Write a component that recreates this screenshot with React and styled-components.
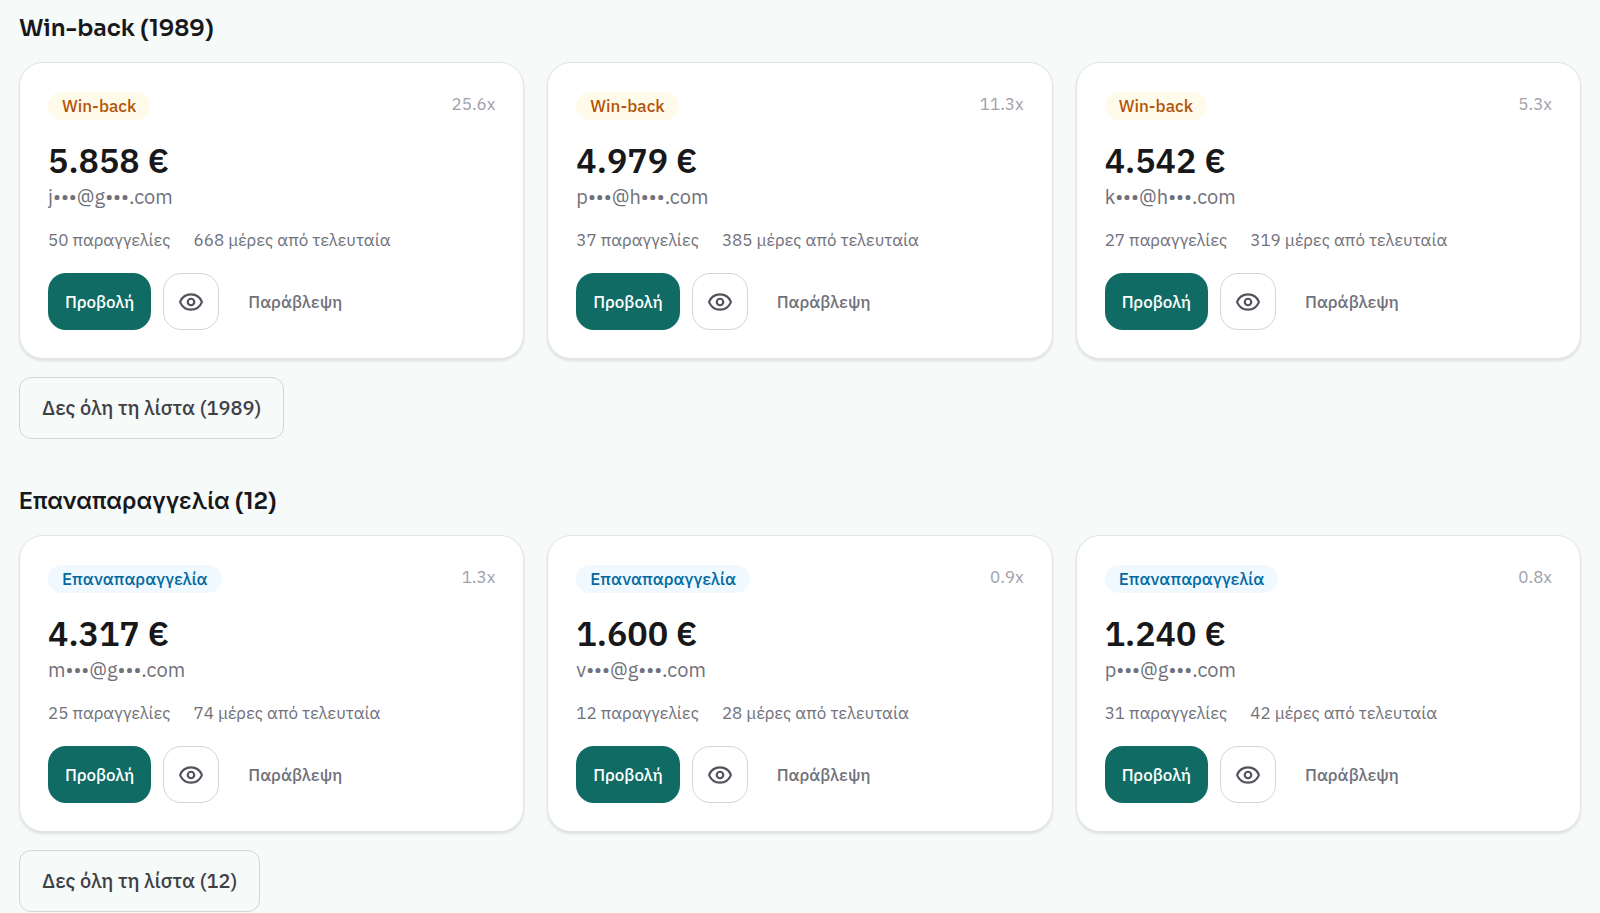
import styled, { createGlobalStyle } from "styled-components"
import { Eye } from "lucide-react"

const GlobalStyle = createGlobalStyle`
*{ box-sizing:border-box; }
body{
  margin:0;
  background:#f6faf9;
  color:#18181b;
  font-family:"IBM Plex Sans", Roboto, "Noto Sans", sans-serif;
}
button{
  font-family:inherit;
  cursor:pointer;
}
`
const Wrapper = styled.main`
display:flex;
flex-direction:column;
gap:48px;
padding:14px 19px 0 19px;
`
const Section = styled.section`
display:flex;
flex-direction:column;
align-items:flex-start;
`
const Title = styled.h2`
margin:0 0 18px 0;
font-family:Sora, Inter, sans-serif;
font-size:23px;
line-height:30px;
font-weight:600;
`
const Grid = styled.div`
display:grid;
grid-template-columns:repeat(3, 1fr);
gap:23px;
width:100%;
`
const Card = styled.article`
padding:29px 28px 28px;
background:#fff;
border:1px solid #e4e4e7;
border-radius:24px;
box-shadow:0 2px 3px rgba(0,0,0,0.1);
`
const CardTop = styled.div`
display:flex;
align-items:flex-start;
justify-content:space-between;
`
const Badge = styled.span`
padding:0 14px;
border-radius:14px;
font-size:17px;
line-height:28px;
font-weight:500;
color:${props => props.$tone === 'amber' ? '#b45309' : '#0369a1'};
background:${props => props.$tone === 'amber' ? '#fffbeb' : '#f0f9ff'};
`
const Ratio = styled.span`
font-size:17px;
line-height:24px;
color:#a1a1aa;
`
const Amount = styled.p`
margin:18px 0 0 0;
font-size:34px;
line-height:45px;
font-weight:600;
`
const Email = styled.p`
margin:0;
font-size:20px;
line-height:28px;
color:#71717a;
`
const Stats = styled.div`
display:flex;
gap:23px;
margin-top:17px;
font-size:17px;
line-height:24px;
color:#71717a;
`
const Actions = styled.div`
display:flex;
gap:12px;
margin-top:21px;
`
const Button = styled.button`
display:flex;
align-items:center;
justify-content:center;
height:57px;
padding:0 17px;
border:0;
border-radius:18px;
font-size:17px;
font-weight:500;
color:#fff;
background:#0f6b63;
`
const IconButton = styled(Button)`
width:56px;
padding:0;
border:1px solid #d4d4d8;
color:#52525b;
background:#fff;
`
const GhostButton = styled(Button)`
color:#71717a;
background:transparent;
`
const ListButton = styled.button`
height:62px;
margin-top:18px;
padding:0 22px 2px;
border:1px solid #d4d4d8;
border-radius:12px;
font-size:20px;
font-weight:500;
color:#3f3f46;
background:transparent;
`

const sections = [
  {
    name: 'Win-back',
    total: 1989,
    tone: 'amber',
    customers: [
      { amount: '5.858 €', email: 'j•••@g•••.com', ratio: '25.6x', orders: 50, days: 668 },
      { amount: '4.979 €', email: 'p•••@h•••.com', ratio: '11.3x', orders: 37, days: 385 },
      { amount: '4.542 €', email: 'k•••@h•••.com', ratio: '5.3x', orders: 27, days: 319 },
    ],
  },
  {
    name: 'Επαναπαραγγελία',
    total: 12,
    tone: 'sky',
    customers: [
      { amount: '4.317 €', email: 'm•••@g•••.com', ratio: '1.3x', orders: 25, days: 74 },
      { amount: '1.600 €', email: 'v•••@g•••.com', ratio: '0.9x', orders: 12, days: 28 },
      { amount: '1.240 €', email: 'p•••@g•••.com', ratio: '0.8x', orders: 31, days: 42 },
    ],
  },
]

const CustomerCard = ({ name, tone, customer }) => {
  return (
    <Card>
      <CardTop>
        <Badge $tone={tone}>{name}</Badge>
        <Ratio>{customer.ratio}</Ratio>
      </CardTop>
      <Amount>{customer.amount}</Amount>
      <Email>{customer.email}</Email>
      <Stats>
        <span>{`${customer.orders} παραγγελίες`}</span>
        <span>{`${customer.days} μέρες από τελευταία`}</span>
      </Stats>
      <Actions>
        <Button type="button">Προβολή</Button>
        <IconButton type="button" aria-label="Προεπισκόπηση">
          <Eye size={26} strokeWidth={2} />
        </IconButton>
        <GhostButton type="button">Παράβλεψη</GhostButton>
      </Actions>
    </Card>
  )
}

const App = () => {
  return (
    <>
      <GlobalStyle />
      <Wrapper>
        {sections.map(section => (
          <Section key={section.name}>
            <Title>{`${section.name} (${section.total})`}</Title>
            <Grid>
              {section.customers.map(customer => (
                <CustomerCard
                  key={customer.amount}
                  name={section.name}
                  tone={section.tone}
                  customer={customer}
                />
              ))}
            </Grid>
            <ListButton type="button">{`Δες όλη τη λίστα (${section.total})`}</ListButton>
          </Section>
        ))}
      </Wrapper>
    </>
  )
}
export default App
